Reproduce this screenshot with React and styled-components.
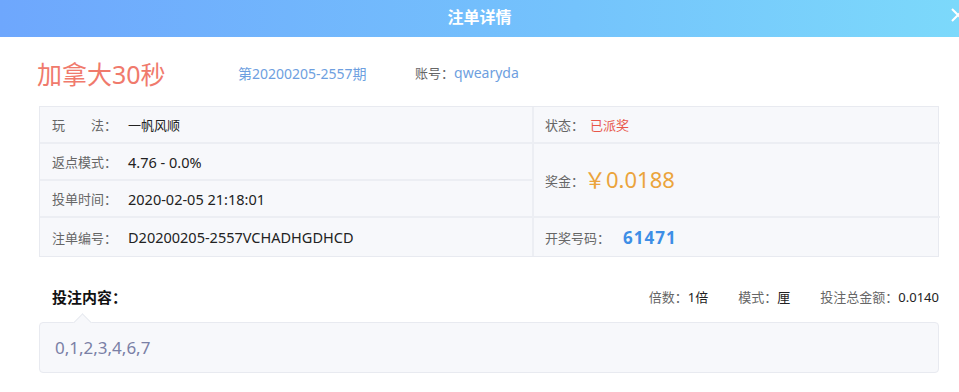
import React from "react";
import styled, { createGlobalStyle } from "styled-components";

const GlobalStyle = createGlobalStyle`
  * { box-sizing: border-box; }
  body {
    margin: 0;
    background: #fff;
    font-family: "Noto Sans", "Noto Sans CJK SC", sans-serif;
    color: #333;
  }
`;

const order = {
  game: "加拿大30秒",
  issue: "第20200205-2557期",
  account: "qwearyda",
  play: "一帆风顺",
  rebate: "4.76 - 0.0%",
  time: "2020-02-05 21:18:01",
  no: "D20200205-2557VCHADHGDHCD",
  status: "已派奖",
  prize: "￥0.0188",
  result: "61471",
  times: "1倍",
  mode: "厘",
  total: "0.0140",
  content: "0,1,2,3,4,6,7",
};

const App = () => {
  return (
    <>
      <GlobalStyle />
      <Modal>
        <Header>
          注单详情
          <Close viewBox="0 0 16 16">
            <path d="M2 2 L14 14 M14 2 L2 14" />
          </Close>
        </Header>
        <Body>
          <TitleRow>
            <GameName>{order.game}</GameName>
            <Issue>{order.issue}</Issue>
            <Account>
              账号：<AccountName>{order.account}</AccountName>
            </Account>
          </TitleRow>

          <InfoTable>
            <Cell>
              <Label>玩&emsp;&emsp;法：</Label>
              <Value $cjk>{order.play}</Value>
            </Cell>
            <Cell $right>
              <RightLabel>状态：</RightLabel>
              <Status>{order.status}</Status>
            </Cell>
            <Cell>
              <Label>返点模式：</Label>
              <Value>{order.rebate}</Value>
            </Cell>
            <Cell $right $span={2}>
              <RightLabel>奖金：</RightLabel>
              <Prize>{order.prize}</Prize>
            </Cell>
            <Cell>
              <Label>投单时间：</Label>
              <Value>{order.time}</Value>
            </Cell>
            <Cell $last>
              <Label>注单编号：</Label>
              <Value>{order.no}</Value>
            </Cell>
            <Cell $right $last>
              <RightLabel>开奖号码：</RightLabel>
              <Result>{order.result}</Result>
            </Cell>
          </InfoTable>

          <BetHead>
            <BetTitle>投注内容：</BetTitle>
            <BetMeta>
              <MetaItem>
                倍数：<MetaValue>{order.times}</MetaValue>
              </MetaItem>
              <MetaItem>
                模式：<MetaValue>{order.mode}</MetaValue>
              </MetaItem>
              <MetaItem>
                投注总金额：<MetaValue>{order.total}</MetaValue>
              </MetaItem>
            </BetMeta>
          </BetHead>
          <ContentBox>{order.content}</ContentBox>
        </Body>
      </Modal>
    </>
  );
};

const Modal = styled.div`
  width: 959px;
  height: 392px;
  background: #fff;
  overflow: hidden;
`;

const Header = styled.div`
  position: relative;
  height: 37px;
  line-height: 35px;
  text-align: center;
  color: #fff;
  font-size: 16px;
  font-weight: bold;
  background: linear-gradient(90deg, #6ea7fd 0%, #74c3fc 60%, #7cd9fb 100%);
`;

const Close = styled.svg`
  position: absolute;
  right: -7px;
  top: 7px;
  width: 16px;
  height: 16px;
  stroke: #fff;
  stroke-width: 2;
  fill: none;
`;

const Body = styled.div`
  padding: 0 20px 0 39px;
`;

const TitleRow = styled.div`
  display: flex;
  align-items: center;
  height: 69px;
  padding-top: 2px;
`;

const GameName = styled.div`
  font-size: 25px;
  color: #f07a6c;
  width: 201px;
  margin-left: -2px;
`;

const Issue = styled.div`
  font-size: 14px;
  color: #6e9fe0;
  width: 177px;
`;

const Account = styled.div`
  font-size: 13px;
  color: #666;
`;

const AccountName = styled.span`
  font-size: 14px;
  color: #6e9fe0;
`;

const InfoTable = styled.div`
  display: grid;
  grid-template-columns: 494px 406px;
  grid-template-rows: 37px 37px 37px 38px;
  grid-auto-flow: row dense;
  background: #f7f8fb;
  border: 1px solid #e8eaf0;
  width: 900px;
`;

const Cell = styled.div`
  display: flex;
  align-items: center;
  grid-column: ${(p) => (p.$right ? 2 : 1)};
  ${(p) => (p.$span ? `grid-row: span ${p.$span};` : "")}
  border-bottom: ${(p) => (p.$last ? "none" : "2px solid #eceef3")};
  ${(p) => (p.$right ? "" : "border-right: 2px solid #eceef3;")}
  padding-left: ${(p) => (p.$right ? "11px" : "12px")};
  font-size: 13px;
`;

const Label = styled.span`
  color: #666;
  width: 76px;
`;

const RightLabel = styled.span`
  color: #666;
`;

const Value = styled.span`
  color: #222;
  font-size: ${(p) => (p.$cjk ? "13px" : "14.5px")};
`;

const Status = styled.span`
  color: #e8574a;
  margin-left: 6px;
`;

const Prize = styled.span`
  color: #eba43c;
  font-size: 22px;
  margin-top: -4px;
`;

const Result = styled.span`
  color: #3d8ee6;
  font-size: 17px;
  font-weight: bold;
  letter-spacing: 1px;
  margin-left: 13px;
`;

const BetHead = styled.div`
  display: flex;
  justify-content: space-between;
  align-items: center;
  height: 65px;
  padding: 14px 0 0 13px;
  width: 900px;
`;

const BetTitle = styled.div`
  font-size: 15px;
  font-weight: bold;
  color: #111;
`;

const BetMeta = styled.div`
  display: flex;
  gap: 30px;
  font-size: 13px;
  color: #666;
`;

const MetaItem = styled.span``;

const MetaValue = styled.span`
  color: #222;
`;

const ContentBox = styled.div`
  position: relative;
  width: 900px;
  height: 51px;
  background: #f7f8fb;
  border: 1px solid #e8eaf0;
  border-radius: 4px;
  padding-left: 15px;
  line-height: 50px;
  font-size: 17px;
  color: #7a80a6;

  &::before {
    content: "";
    position: absolute;
    left: 36px;
    top: -7px;
    width: 12px;
    height: 12px;
    background: #f7f8fb;
    border-left: 1px solid #e8eaf0;
    border-top: 1px solid #e8eaf0;
    transform: rotate(45deg);
  }
`;

export default App;
